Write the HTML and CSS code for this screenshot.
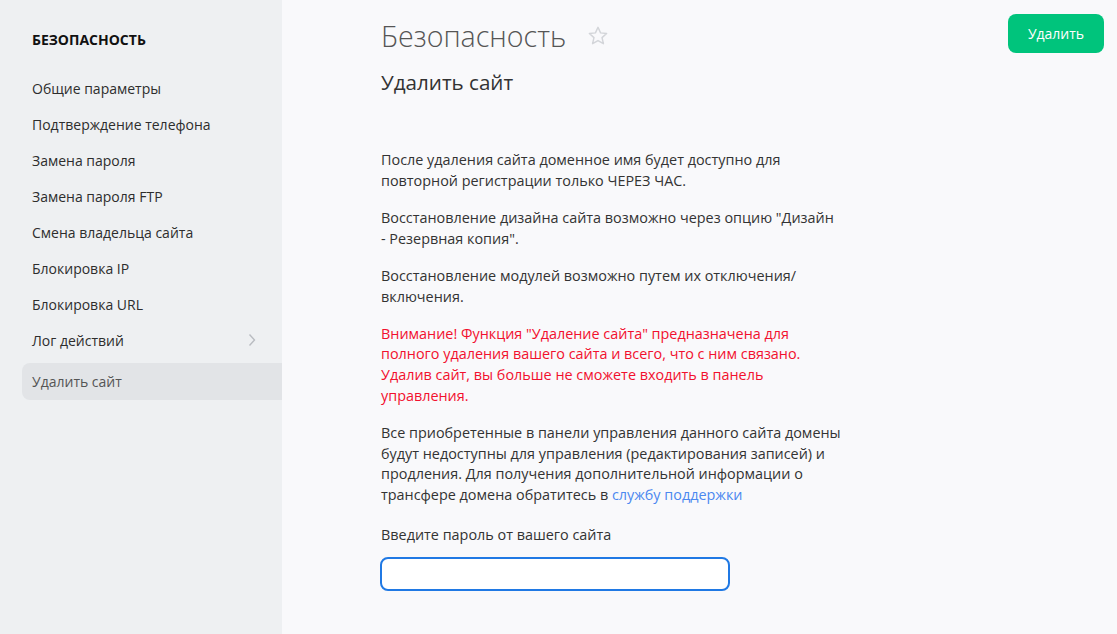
FILE: index.html
```html
<!DOCTYPE html>
<html lang="ru">
<head>
<meta charset="UTF-8">
<meta name="viewport" content="width=device-width, initial-scale=1.0">
<title>Безопасность</title>
<link rel="stylesheet" href="styles.css">
</head>
<body>
<div class="layout">
    <aside class="sidebar">
        <div class="side-title">БЕЗОПАСНОСТЬ</div>
        <ul class="menu">
            <li>Общие параметры</li>
            <li>Подтверждение телефона</li>
            <li>Замена пароля</li>
            <li>Замена пароля FTP</li>
            <li>Смена владельца сайта</li>
            <li>Блокировка IP</li>
            <li>Блокировка URL</li>
            <li class="has-sub">Лог действий
                <svg class="chev" width="8" height="14" viewBox="0 0 8 14"><path d="M1.5 1.5 L6.5 7 L1.5 12.5" fill="none" stroke="#b9bcc1" stroke-width="1.4"/></svg>
            </li>
            <li class="active">Удалить сайт</li>
        </ul>
    </aside>

    <main class="content">
        <div class="head">
            <h1>Безопасность</h1>
            <svg class="star" width="22" height="22" viewBox="0 0 24 24"><path d="M12 2.5 L14.8 8.6 L21.4 9.3 L16.4 13.8 L17.9 20.4 L12 17 L6.1 20.4 L7.6 13.8 L2.6 9.3 L9.2 8.6 Z" fill="none" stroke="#d3d5d9" stroke-width="1.6" stroke-linejoin="round"/></svg>
            <button class="btn-delete">Удалить</button>
        </div>
        <h2>Удалить сайт</h2>

        <div class="text">
            <p>После удаления сайта доменное имя будет доступно для повторной регистрации только ЧЕРЕЗ ЧАС.</p>
            <p>Восстановление дизайна сайта возможно через опцию "Дизайн - Резервная копия".</p>
            <p>Восстановление модулей возможно путем их отключения/ включения.</p>
            <p class="warn">Внимание! Функция "Удаление сайта" предназначена для полного удаления вашего сайта и всего, что с ним связано. Удалив сайт, вы больше не сможете входить в панель управления.</p>
            <p>Все приобретенные в панели управления данного сайта домены будут недоступны для управления (редактирования записей) и продления. Для получения дополнительной информации о трансфере домена обратитесь в <a href="#">службу поддержки</a></p>
            <label class="label" for="pass">Введите пароль от вашего сайта</label>
            <input type="password" id="pass" class="pass">
        </div>
    </main>
</div>
</body>
</html>
```

FILE: styles.css
```css
* {
    box-sizing: border-box;
}

body {
    margin: 0;
    font-family: 'Open Sans', 'Noto Sans', sans-serif;
    font-size: 14px;
    color: #333;
    background: #f9f9fb;
}

.layout {
    display: flex;
    min-height: 634px;
}

.sidebar {
    width: 282px;
    flex-shrink: 0;
    background: #eef0f2;
    padding: 30px 0 0 22px;
}

.side-title {
    font-weight: bold;
    font-size: 14px;
    color: #111;
    padding-left: 10px;
    line-height: 20px;
}

.menu {
    list-style: none;
    margin: 20px 0 0 0;
    padding: 0;
}

.menu li {
    height: 36px;
    padding-left: 10px;
    color: #2d2d2d;
    font-size: 14px;
    display: flex;
    align-items: center;
}

.menu li.has-sub {
    justify-content: space-between;
    padding-right: 26px;
}

.menu li.active {
    margin-top: 5px;
    height: 37px;
    background: #e2e4e7;
    border-radius: 8px 0 0 8px;
    color: #555;
}

.content {
    flex: 1;
    padding: 14px 13px 0 99px;
}

.head {
    display: flex;
    align-items: center;
    height: 39px;
}

h1 {
    margin: 0;
    padding-top: 4px;
    font-size: 28.6px;
    font-weight: 300;
    color: #555;
    line-height: 39px;
}

.star {
    margin-left: 21px;
    margin-top: 4px;
}

.btn-delete {
    margin-left: auto;
    width: 96px;
    height: 39px;
    background: #00c47c;
    color: #fff;
    border: none;
    border-radius: 8px;
    font-family: inherit;
    font-size: 14px;
    cursor: pointer;
}

h2 {
    margin: 16px 0 0 0;
    font-size: 20.6px;
    font-weight: normal;
    color: #333;
    line-height: 27px;
}

.text {
    width: 460px;
    margin-top: 54px;
    font-size: 14.4px;
}

.text p {
    margin: 0 0 16.5px 0;
    line-height: 20.7px;
}

.warn {
    color: #f2102e;
}

a {
    color: #4b88f0;
    text-decoration: none;
}

.label {
    display: block;
    line-height: 20px;
    margin-top: 19px;
}

.pass {
    display: block;
    width: 350px;
    height: 34px;
    margin-top: 12px;
    margin-left: -1px;
    border: 2px solid #2079e4;
    border-radius: 8px;
    background: #fff;
    outline: none;
}
```
